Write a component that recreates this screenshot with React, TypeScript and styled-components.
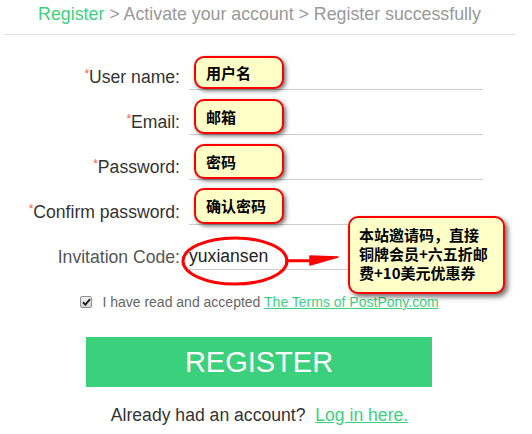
import React from "react";
import styled, { createGlobalStyle } from "styled-components";

const GlobalStyle = createGlobalStyle`
  body {
    margin: 0;
    background: #fff;
    font-family: "Liberation Sans", Arial, sans-serif;
  }
`;

const Page = styled.div`
  width: 511px;
  margin-left: 4px;
`;

const Steps = styled.div`
  height: 34px;
  border-bottom: 1px solid #ddd;
  text-align: center;
  font-size: 17.8px;
  line-height: 28px;
  color: #999;
`;

const Current = styled.span`
  color: #3dd07f;
`;

const Form = styled.div`
  padding-top: 10px;
`;

const Row = styled.div`
  display: flex;
  align-items: flex-end;
  height: 45px;
`;

const Label = styled.div<{ $muted?: boolean }>`
  width: 176px;
  margin-right: 9px;
  text-align: right;
  font-size: 17.6px;
  line-height: 26px;
  color: ${(p) => (p.$muted ? "#555" : "#333")};
`;

const Star = styled.span`
  color: #f55;
  font-size: 12px;
  vertical-align: 5px;
`;

const Field = styled.div`
  position: relative;
  width: 294px;
  height: 45px;
  border-bottom: 1px solid #ccc;
  box-sizing: border-box;
  font-size: 17.6px;
  line-height: 26px;
  color: #222;
  display: flex;
  align-items: flex-end;
`;

const Note = styled.div<{ $h: number }>`
  position: absolute;
  left: 5px;
  bottom: 0;
  width: 90px;
  height: ${(p) => p.$h}px;
  box-sizing: border-box;
  background: #ffffc8;
  border: 2px solid #f00;
  border-radius: 10px;
  box-shadow: 2px 2px 4px rgba(0, 0, 0, 0.55);
  display: flex;
  align-items: center;
  padding-left: 10px;
  font-family: "Noto Sans CJK SC", sans-serif;
  font-weight: 700;
  font-size: 15px;
  color: #000;
`;

const Promo = styled.div`
  position: absolute;
  left: 159px;
  top: -9px;
  width: 157px;
  height: 78px;
  box-sizing: border-box;
  background: #ffffc8;
  border: 2px solid #f00;
  border-radius: 10px;
  box-shadow: 3px 3px 5px rgba(0, 0, 0, 0.55);
  padding: 7px 0 0 9px;
  font-family: "Noto Sans CJK SC", sans-serif;
  font-weight: 700;
  font-size: 15px;
  line-height: 19px;
  color: #000;
  z-index: 2;
`;

const Mark = styled.svg`
  position: absolute;
  left: -9px;
  top: 10px;
  overflow: visible;
  z-index: 1;
`;

const Agree = styled.div`
  display: flex;
  align-items: center;
  justify-content: center;
  gap: 10px;
  margin-top: 24px;
  font-size: 14px;
  color: #666;
`;

const CheckBox = styled.span`
  display: inline-flex;
  align-items: center;
  justify-content: center;
  width: 12px;
  height: 12px;
  box-sizing: border-box;
  border: 1px solid #8f8f8f;
  border-radius: 2px;
  background: linear-gradient(#f2f2f2, #d6d6d6);
`;

const TextLink = styled.a`
  color: #3dd07f;
  text-decoration: underline;
`;

const Button = styled.button`
  display: block;
  margin: 27px 0 0 82px;
  width: 346px;
  height: 50px;
  border: none;
  background: #3bd07c;
  color: #fff;
  font-family: "Liberation Sans", Arial, sans-serif;
  font-size: 29px;
  padding: 0;
`;

const Footer = styled.div`
  margin-top: 18px;
  text-align: center;
  font-size: 17.6px;
  color: #333;
`;

export default function App() {
  return (
    <>
      <GlobalStyle />
      <Page>
        <Steps>
          <Current>Register</Current> &gt; Activate your account &gt; Register
          successfully
        </Steps>
        <Form>
          <Row>
            <Label>
              <Star>*</Star>User name:
            </Label>
            <Field>
              <Note $h={33}>用户名</Note>
            </Field>
          </Row>
          <Row>
            <Label>
              <Star>*</Star>Email:
            </Label>
            <Field>
              <Note $h={35}>邮箱</Note>
            </Field>
          </Row>
          <Row>
            <Label>
              <Star>*</Star>Password:
            </Label>
            <Field>
              <Note $h={35}>密码</Note>
            </Field>
          </Row>
          <Row>
            <Label>
              <Star>*</Star>Confirm password:
            </Label>
            <Field>
              <Note $h={36}>确认密码</Note>
            </Field>
          </Row>
          <Row>
            <Label $muted>Invitation Code:</Label>
            <Field>
              <span>yuxiansen</span>
              <Mark width="170" height="52" viewBox="0 0 170 52">
                <ellipse
                  cx="55"
                  cy="26"
                  rx="52"
                  ry="23"
                  fill="none"
                  stroke="#f00"
                  strokeWidth="3"
                />
                <path
                  d="M106 25 L130 25 L130 21 L158 22 L130 30 L130 26.5 L106 26.5 Z"
                  fill="#f00"
                  stroke="#f00"
                  strokeWidth="1.5"
                  strokeLinejoin="round"
                />
              </Mark>
              <Promo>
                本站邀请码，直接
                <br />
                铜牌会员+六五折邮
                <br />
                费+10美元优惠券
              </Promo>
            </Field>
          </Row>
        </Form>
        <Agree>
          <CheckBox role="checkbox" aria-checked="true">
            <svg width="9" height="8" viewBox="0 0 9 8">
              <path
                d="M1 4.2 L3.4 6.6 L8 1.2"
                fill="none"
                stroke="#222"
                strokeWidth="2"
              />
            </svg>
          </CheckBox>
          <span>
            I have read and accepted{" "}
            <TextLink href="#">The Terms of PostPony.com</TextLink>
          </span>
        </Agree>
        <Button>REGISTER</Button>
        <Footer>
          Already had an account?&nbsp;&nbsp;<TextLink href="#">Log in here.</TextLink>
        </Footer>
      </Page>
    </>
  );
}
